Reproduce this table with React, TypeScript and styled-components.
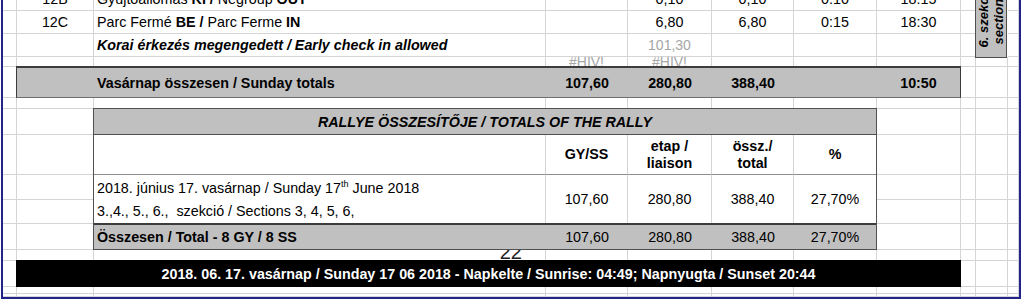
import React from "react";
import styled, { createGlobalStyle } from "styled-components";

const GRID = "#d4d4d4";
const FILL = "#c0c0c0";
const EDGE = "#3c3c3c";
const FRAME = "#23238c";

const COLS = [14, 77, 452, 82, 84, 82, 83, 84, 15, 32, 11];
const ROWS = [23, 23, 23, 10, 31, 11, 26, 40, 25, 24, 26, 11, 26, 7, 3];

const GlobalStyle = createGlobalStyle`
  *, *::before, *::after { box-sizing: border-box; }
  html, body { margin: 0; padding: 0; background: #fff; overflow: hidden; }
  body { font-family: "Liberation Sans", Arial, sans-serif; color: #000; }
`;

const Frame = styled.div`
  margin-left: 1px;
  width: 1020px;
  height: 299px;
  overflow: hidden;
  border-left: 2px solid ${FRAME};
  border-right: 2px solid ${FRAME};
  border-bottom: 2px solid ${FRAME};
`;

const Sheet = styled.div`
  display: grid;
  grid-template-columns: ${COLS.map((c) => `${c}px`).join(" ")};
  grid-template-rows: ${ROWS.map((r) => `${r}px`).join(" ")};
  margin-top: -12px;
  font-size: 14.3px;
`;

type Align = "left" | "center" | "right";

const Cell = styled.div<{ $c: number; $r: number; $align?: Align; $bottom?: boolean }>`
  grid-column: ${(p) => p.$c};
  grid-row: ${(p) => p.$r};
  min-width: 0;
  display: flex;
  align-items: ${(p) => (p.$bottom ? "flex-end" : "center")};
  justify-content: ${(p) =>
    p.$align === "center" ? "center" : p.$align === "right" ? "flex-end" : "flex-start"};
  padding: 0 3px;
  border-right: 1px solid ${GRID};
  border-bottom: 1px solid ${GRID};
  white-space: nowrap;
  overflow: hidden;
`;

const Note = styled.span`
  font-weight: bold;
  font-style: italic;
`;

const Ghost = styled.span<{ $low?: boolean }>`
  color: #a6a6a6;
  font-size: 14px;
  line-height: 1;
  margin-bottom: ${(p) => (p.$low ? "-3px" : "0")};
`;

const PageNo = styled.span`
  font-size: 20px;
  line-height: 1;
  color: #222;
  margin: 0 20px -2px 0;
`;

const TotalsBand = styled.div`
  grid-column: 2 / span 7;
  grid-row: 5;
  margin: -1px 0 0 -1px;
  display: grid;
  grid-template-columns: 77px 452px 82px 84px 82px 83px 83px;
  align-items: center;
  background: ${FILL};
  border-top: 2px solid ${EDGE};
  border-left: 1px solid ${EDGE};
  border-right: 1px solid ${EDGE};
  border-bottom: 1px solid #6e6e6e;
  font-weight: bold;
  white-space: nowrap;
`;

const BandText = styled.span`
  padding-left: 3px;
`;

const BandNum = styled.span`
  text-align: center;
`;

const RallyTable = styled.div`
  grid-column: 3 / span 5;
  grid-row: 7 / span 5;
  margin: -1px 0 0 -1px;
  display: grid;
  grid-template-columns: 452px 82px 84px 82px 82px;
  grid-template-rows: 26px 40px 48px 26px;
  border: 1px solid #505050;
  background: #fff;
  white-space: nowrap;
`;

const TitleBar = styled.div`
  grid-column: 1 / -1;
  display: flex;
  align-items: center;
  justify-content: center;
  background: ${FILL};
  border-bottom: 1px solid #505050;
  font-weight: bold;
  font-style: italic;
`;

const TCell = styled.div<{ $last?: boolean; $bold?: boolean; $fill?: boolean; $top?: boolean; $under?: boolean }>`
  display: flex;
  flex-direction: column;
  align-items: center;
  justify-content: center;
  text-align: center;
  line-height: 17px;
  font-weight: ${(p) => (p.$bold ? "bold" : "normal")};
  background: ${(p) => (p.$fill ? FILL : "transparent")};
  border-right: ${(p) => (p.$last || p.$fill ? "none" : `1px solid ${GRID}`)};
  border-top: ${(p) => (p.$top ? `2px solid ${EDGE}` : "none")};
  border-bottom: ${(p) => (p.$under ? "1px solid #8c8c8c" : "none")};
`;

const TextCell = styled(TCell)`
  align-items: flex-start;
  padding-left: 3px;
  text-align: left;
`;

const DateLines = styled.div`
  display: flex;
  flex-direction: column;
  align-items: flex-start;
  padding-top: 2px;
  line-height: 23px;
  border-right: 1px solid ${GRID};
  padding-left: 3px;
  sup {
    font-size: 9px;
    line-height: 0;
    vertical-align: 6px;
  }
`;

const Bar = styled.div`
  grid-column: 2 / span 7;
  grid-row: 13;
  margin: -1px 0 0 -1px;
  display: flex;
  align-items: center;
  justify-content: center;
  background: #000;
  color: #fff;
  font-weight: bold;
  font-size: 14.3px;
  white-space: nowrap;
`;

const SideTab = styled.div`
  grid-column: 10;
  grid-row: 1 / span 3;
  margin: -1px 1px -1px -1px;
  display: flex;
  align-items: center;
  justify-content: center;
  background: ${FILL};
  border: 1px solid #505050;
  overflow: hidden;
`;

const SideLabel = styled.span`
  writing-mode: vertical-rl;
  transform: rotate(180deg);
  font-size: 13px;
  font-weight: bold;
  font-style: italic;
  line-height: 15px;
  text-align: center;
  white-space: nowrap;
  margin-bottom: 12px;
`;

type Entry = { c: number; r: number; align?: Align; bottom?: boolean; node: React.ReactNode };

const entries: Entry[] = [
  { c: 2, r: 1, align: "center", node: "12B" },
  { c: 3, r: 1, node: <span>Gyűjtőállomás <b>KI /</b> Negroup <b>OUT</b></span> },
  { c: 5, r: 1, align: "center", node: "0,10" },
  { c: 6, r: 1, align: "center", node: "0,10" },
  { c: 7, r: 1, align: "center", node: "0:10" },
  { c: 8, r: 1, align: "center", node: "18:15" },
  { c: 2, r: 2, align: "center", node: "12C" },
  { c: 3, r: 2, node: <span>Parc Fermé <b>BE /</b> Parc Ferme <b>IN</b></span> },
  { c: 5, r: 2, align: "center", node: "6,80" },
  { c: 6, r: 2, align: "center", node: "6,80" },
  { c: 7, r: 2, align: "center", node: "0:15" },
  { c: 8, r: 2, align: "center", node: "18:30" },
  { c: 3, r: 3, node: <Note>Korai érkezés megengedett / Early check in allowed</Note> },
  { c: 5, r: 3, align: "center", node: <Ghost>101,30</Ghost> },
  { c: 4, r: 4, align: "center", bottom: true, node: <Ghost $low>#HIV!</Ghost> },
  { c: 5, r: 4, align: "center", bottom: true, node: <Ghost $low>#HIV!</Ghost> },
  { c: 3, r: 12, align: "right", bottom: true, node: <PageNo>22</PageNo> },
];

const spans = [
  { c: 2, r: 5, cs: 7, rs: 1 },
  { c: 3, r: 7, cs: 5, rs: 5 },
  { c: 2, r: 13, cs: 7, rs: 1 },
  { c: 10, r: 1, cs: 1, rs: 3 },
];

const isTaken = (c: number, r: number) =>
  entries.some((e) => e.c === c && e.r === r) ||
  spans.some((s) => c >= s.c && c < s.c + s.cs && r >= s.r && r < s.r + s.rs);

const fillers: { c: number; r: number }[] = [];
ROWS.forEach((_, ri) =>
  COLS.forEach((_, ci) => {
    if (!isTaken(ci + 1, ri + 1)) fillers.push({ c: ci + 1, r: ri + 1 });
  })
);

const figures = ["107,60", "280,80", "388,40", "27,70%"];

export default function App() {
  return (
    <>
      <GlobalStyle />
      <Frame>
        <Sheet>
          {fillers.map((f) => (
            <Cell key={`f${f.c}-${f.r}`} $c={f.c} $r={f.r} />
          ))}
          {entries.map((e) => (
            <Cell key={`e${e.c}-${e.r}`} $c={e.c} $r={e.r} $align={e.align} $bottom={e.bottom}>
              {e.node}
            </Cell>
          ))}

          <SideTab>
            <SideLabel>
              6. szekció
              <br />
              section 6
            </SideLabel>
          </SideTab>

          <TotalsBand>
            <span />
            <BandText>Vasárnap összesen / Sunday totals</BandText>
            <BandNum>107,60</BandNum>
            <BandNum>280,80</BandNum>
            <BandNum>388,40</BandNum>
            <span />
            <BandNum>10:50</BandNum>
          </TotalsBand>

          <RallyTable>
            <TitleBar>RALLYE ÖSSZESÍTŐJE / TOTALS OF THE RALLY</TitleBar>

            <TCell $under />
            <TCell $bold $under>GY/SS</TCell>
            <TCell $bold $under>
              <span>etap /</span>
              <span>liaison</span>
            </TCell>
            <TCell $bold $under>
              <span>össz./</span>
              <span>total</span>
            </TCell>
            <TCell $bold $under $last>%</TCell>

            <DateLines>
              <span>
                2018. június 17. vasárnap / Sunday 17<sup>th</sup> June 2018
              </span>
              <span>3.,4., 5., 6.,&nbsp; szekció / Sections 3, 4, 5, 6,</span>
            </DateLines>
            {figures.map((v, i) => (
              <TCell key={`d${v}`} $last={i === figures.length - 1}>
                {v}
              </TCell>
            ))}

            <TextCell $fill $top $bold>Összesen / Total - 8 GY / 8 SS</TextCell>
            {figures.map((v) => (
              <TCell key={`t${v}`} $fill $top>
                {v}
              </TCell>
            ))}
          </RallyTable>

          <Bar>
            2018. 06. 17. vasárnap / Sunday 17 06 2018 - Napkelte / Sunrise: 04:49; Napnyugta / Sunset 20:44
          </Bar>
        </Sheet>
      </Frame>
    </>
  );
}
